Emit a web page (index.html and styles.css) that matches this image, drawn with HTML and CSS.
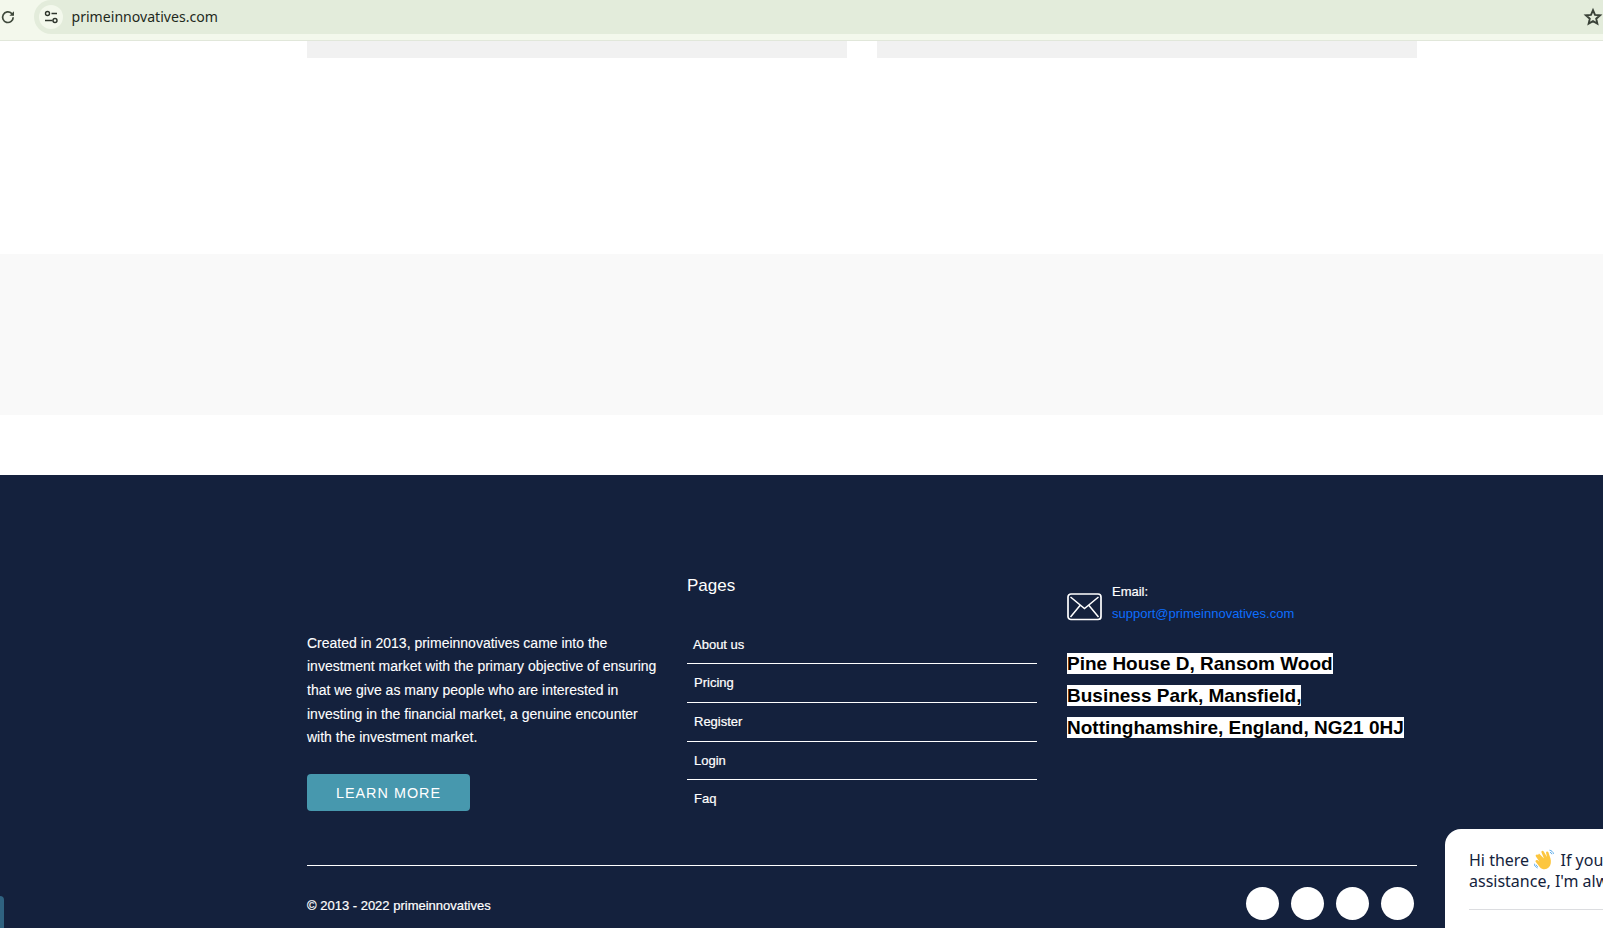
FILE: index.html
```html
<!DOCTYPE html>
<html lang="en">
<head>
<meta charset="utf-8">
<title>primeinnovatives</title>
<link rel="stylesheet" href="styles.css">
</head>
<body>
<div class="browser-bar">
  <svg class="reload" viewBox="0 0 16 16" width="16" height="16"><path d="M13.2 8.200a5.300 5.300 0 1 1-1.600-3.800L13 5.800" fill="none" stroke="#3f4a3c" stroke-width="1.700"/><path d="M14 2.200v4.600H9.400z" fill="#3f4a3c"/></svg>
  <div class="omnibox">
    <span class="site-chip">
      <svg viewBox="0 0 16 16" width="16" height="16"><circle cx="4.500" cy="4.500" r="2" fill="none" stroke="#2e352c" stroke-width="1.400"/><path d="M8.500 4.500H14M2 11.500h7.500" stroke="#2e352c" stroke-width="1.600" fill="none"/><circle cx="12" cy="11.500" r="2" fill="none" stroke="#2e352c" stroke-width="1.400"/></svg>
    </span>
    <span class="url">primeinnovatives.com</span>
    <svg class="star" viewBox="0 0 18 18" width="20" height="20"><path d="M9 2.800l1.800 4.300 4.600.4-3.500 3 1 4.500L9 12.700 5.100 15l1-4.500-3.500-3 4.600-.4z" fill="none" stroke="#3a4238" stroke-width="1.700"/></svg>
  </div>
</div>

<main class="page">
  <section class="cards">
    <div class="card"></div>
    <div class="card"></div>
  </section>
  <section class="band"></section>
  <footer class="footer">
    <div class="footer-grid">
      <div class="about">
        <p class="about-text">Created in 2013, primeinnovatives came into the investment market with the primary objective of ensuring that we give as many people who are interested in investing in the financial market, a genuine encounter with the investment market.</p>
        <a class="learn-btn">LEARN MORE</a>
      </div>
      <div class="pages">
        <h4 class="pages-title">Pages</h4>
        <ul class="links">
          <li class="first">About us</li>
          <li>Pricing</li>
          <li>Register</li>
          <li>Login</li>
          <li>Faq</li>
        </ul>
      </div>
      <div class="contact">
        <div class="email-row">
          <svg class="mail" viewBox="0 0 36 28" width="36" height="28"><rect x="1" y="1" width="33" height="25.500" rx="3" fill="none" stroke="#fff" stroke-width="1.700"/><path d="M3.500 4l14 11.500L31.500 4M3.500 24l9.500-11.500M31.500 24l-9.500-11.500" fill="none" stroke="#fff" stroke-width="1.500"/></svg>
          <div class="email-text">
            <div class="email-label">Email:</div>
            <a class="email-link">support@primeinnovatives.com</a>
          </div>
        </div>
        <p class="address"><span class="address-mark">Pine House D, Ransom Wood Business Park, Mansfield, Nottinghamshire, England, NG21 0HJ</span></p>
      </div>
    </div>
    <div class="footer-bottom">
      <span class="copyright">© 2013 - 2022 primeinnovatives</span>
      <div class="socials">
        <span class="social"></span>
        <span class="social"></span>
        <span class="social"></span>
        <span class="social"></span>
      </div>
    </div>
  </footer>
</main>

<span class="left-tab"></span>
<aside class="chat">
  <p class="chat-msg">Hi there <svg class="wave" viewBox="1 0 21 21" width="21" height="21"><path d="M6 4.500l5 5-2.500-6c-.6-1.500 1.300-2.400 2.200-1l3.300 5.500-.9-4c-.4-1.600 1.700-2.200 2.300-.7l2 6c1 3.500.5 6.800-1.500 9-2.500 2.700-6.500 2.600-9-.1L2.800 13c-1.100-1.300.6-2.800 1.900-1.700l1.800 1.500-3.600-5.300c-.9-1.500 1-2.700 2.100-1.500z" fill="#fcc63f"/><path d="M16.500 1.200c2 .3 3.500 1.600 4.100 3.600M17 3.300c1 .2 1.700.9 2 1.900M1 14.500c.4 2.100 1.600 3.700 3.600 4.500M3 15.700c.3 1 .9 1.600 1.800 2" fill="none" stroke="#5dadec" stroke-width="1"/></svg> If you need any assistance, I'm always here.</p>
  <div class="chat-rule"></div>
  <div class="chat-next"></div>
</aside>
</body>
</html>
```
FILE: styles.css
```css
* { box-sizing: border-box; }
html, body { margin: 0; padding: 0; height: 928px; overflow: hidden; background: #fff; }
body { font-family: "Liberation Sans", Arial, sans-serif; position: relative; }

.browser-bar { height: 41px; background: #f3f8ec; border-bottom: 1px solid #e1e7da; display: flex; align-items: flex-start; }
.reload { margin: 9px 0 0 0; flex: none; }
.omnibox { flex: 1; height: 34px; margin-left: 18px; background: #e3ecdb; border-radius: 17px 0 0 17px; display: flex; align-items: center; padding-left: 5px; padding-right: 0; }
.site-chip { width: 24px; height: 24px; border-radius: 50%; background: #f3f8ec; display: flex; align-items: center; justify-content: center; }
.url { margin-left: 8.500px; margin-top: -2px; font-family: "Noto Sans", sans-serif; font-size: 14.100px; color: #1f2a1d; flex: 1; }
.star { flex: none; }

.page { display: block; }
.cards { display: flex; gap: 30px; margin-left: 307px; width: 1110px; height: 213px; }
.card { width: 540px; height: 17px; background: #f1f1f1; }
.band { height: 161px; background: #f9f9f9; margin-bottom: 60px; }

.footer { background: #14213d; height: 460px; padding: 0 0 0 307px; color: #fff; }
.footer-grid { width: 1110px; display: grid; grid-template-columns: 350px 350px 350px; column-gap: 30px; padding-top: 99px; height: 390px; }
.about { padding-top: 57.500px; }
.about-text { margin: 0; font-size: 14px; line-height: 23.700px; -webkit-text-stroke: 0.100px #fff; }
.learn-btn { display: flex; align-items: center; justify-content: center; width: 163px; height: 37px; margin-top: 24px; background: #4798ae; border-radius: 4px; font-size: 14.400px; letter-spacing: 1px; color: #fff; }
.pages-title { margin: 2px 0 0; font-size: 17px; font-weight: 400; line-height: 20px; }
.links { list-style: none; margin: 29.500px 0 0; padding: 0; }
.links li { height: 38.700px; padding: 10px 0 0 7px; font-size: 13px; line-height: 18px; border-bottom: 1px solid #fff; -webkit-text-stroke: 0.200px #fff; }
.links li.first { padding-left: 6px; }
.links li:last-child { border-bottom: 0; }
.email-row { display: flex; align-items: center; gap: 9px; padding-top: 6.500px; }
.mail { flex: none; margin-top: 8px; }
.email-text { font-size: 13px; line-height: 22px; }
.email-label { color: #fff; -webkit-text-stroke: 0.200px #fff; }
.email-link { color: #0d6efd; }
.address { margin: 23.500px 0 0; width: 340px; font-size: 19px; font-weight: 700; line-height: 32px; color: #000; }
.address-mark { background: #fff; }

.footer-bottom { width: 1110px; border-top: 1px solid #fff; display: flex; align-items: center; justify-content: space-between; padding: 16px 3px 0 0; height: 60px; }
.copyright { font-size: 13px; -webkit-text-stroke: 0.200px #fff; margin-top: 4px; }
.socials { display: flex; gap: 12px; }
.social { width: 33px; height: 33px; border-radius: 50%; background: #fff; }

.left-tab { position: absolute; left: 0; top: 896px; width: 4px; height: 32px; background: #2f6280; border-radius: 0 4px 0 0; }
.chat { position: absolute; left: 1445px; top: 829px; width: 340px; height: 140px; background: #fff; border-radius: 16px 0 0 0; padding: 20px 24px; }
.chat-msg { margin: 0; font-family: "Noto Sans", sans-serif; font-size: 16px; line-height: 21px; color: #14233c; }
.wave { vertical-align: -4px; margin: 0 1px; }
.chat-rule { height: 1px; background: #dcdde0; margin-top: 17px; }
.chat-next { width: 9px; height: 1px; margin-top: 18px; margin-left: 1px; background: #6f86a8; }
```
